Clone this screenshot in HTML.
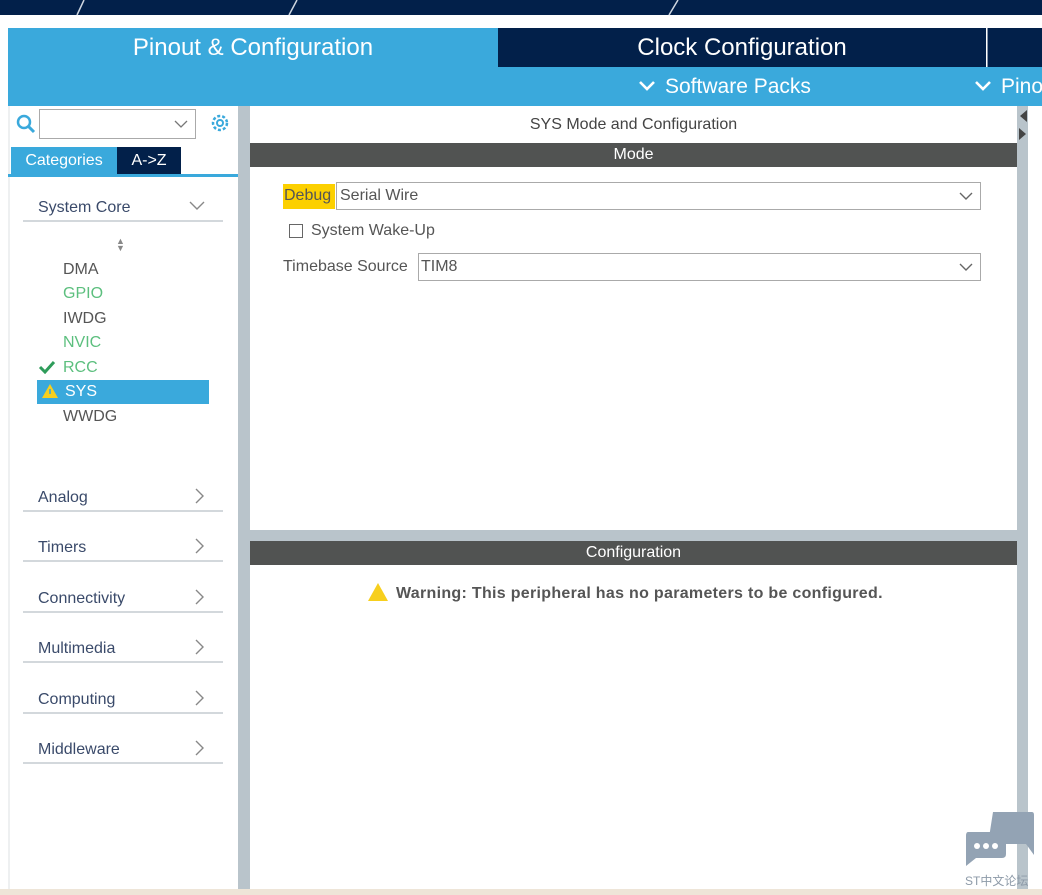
<!DOCTYPE html>
<html><head><meta charset="utf-8"><style>
*{margin:0;padding:0;box-sizing:border-box}
body{width:1042px;height:895px;position:relative;overflow:hidden;background:#fff;font-family:"Liberation Sans","Noto Sans CJK SC",sans-serif}
.a{position:absolute}
.cat{position:absolute;left:23px;width:200px;height:28px;border-bottom:2px solid #d3d8dc;font-size:16px;color:#3a4a6a}
.cat span{position:absolute;left:15px;top:5px}
.cat svg{position:absolute;right:18px;top:4px}
.it{position:absolute;left:63px;font-size:16px;color:#555}
.g{color:#5cbf7e}
</style></head><body>
<div class="a" style="left:0;top:0;width:1042px;height:15px;background:#02204a"></div>
<svg class="a" style="left:0;top:0" width="1042" height="16"><g stroke="#cfd6e0" stroke-width="1.5" fill="none"><path d="M84 0 L77 15"/><path d="M297 0 L289 15"/><path d="M678 0 L669 15"/></g></svg>
<div class="a" style="left:8px;top:28px;width:490px;height:40px;background:#3aa9dc;color:#fff;font-size:24px;text-align:center;line-height:40px">Pinout &amp; Configuration</div>
<div class="a" style="left:498px;top:28px;width:488px;height:40px;background:#02204a;color:#fff;font-size:24px;text-align:center;line-height:40px">Clock Configuration</div>
<div class="a" style="left:987px;top:28px;width:55px;height:40px;background:#02204a;border-left:1px solid #8896aa"></div>
<div class="a" style="left:8px;top:67px;width:1034px;height:39px;background:#3aa9dc"></div>
<svg class="a" style="left:638px;top:80px" width="18" height="12"><path d="M2 2 L9 9 L16 2" stroke="#fff" stroke-width="2.6" fill="none"/></svg>
<div class="a" style="left:665px;top:75px;color:#fff;font-size:21px">Software Packs</div>
<svg class="a" style="left:974px;top:80px" width="18" height="12"><path d="M2 2 L9 9 L16 2" stroke="#fff" stroke-width="2.6" fill="none"/></svg>
<div class="a" style="left:1001px;top:75px;color:#fff;font-size:21px">Pino</div>
<!-- left panel -->
<div class="a" style="left:8px;top:106px;width:232px;height:784px;background:#fff;border-left:2px solid #eef0f1"></div>
<div class="a" style="left:238px;top:106px;width:12px;height:784px;background:#b9c4cb"></div>
<svg class="a" style="left:16px;top:114px" width="22" height="22"><circle cx="8" cy="8" r="6" stroke="#3aa9dc" stroke-width="2.5" fill="none"/><path d="M12 12 L18 18" stroke="#3aa9dc" stroke-width="3"/></svg>
<div class="a" style="left:39px;top:109px;width:157px;height:30px;border:1px solid #aaa;background:#fff"></div>
<svg class="a" style="left:174px;top:120px" width="14" height="9"><path d="M1 1 L7 7 L13 1" stroke="#777" stroke-width="1.3" fill="none"/></svg>
<svg class="a" style="left:208px;top:111px" width="24" height="24"><circle cx="12" cy="12" r="7" stroke="#3aa9dc" stroke-width="2.5" stroke-dasharray="3 2" fill="none"/><circle cx="12" cy="12" r="3" stroke="#3aa9dc" stroke-width="2" fill="none"/></svg>
<div class="a" style="left:11px;top:147px;width:106px;height:27px;background:#3aa9dc;color:#fff;font-size:16px;line-height:27px;text-align:center">Categories</div>
<div class="a" style="left:117px;top:147px;width:64px;height:27px;background:#02204a;color:#fff;font-size:16px;line-height:27px;text-align:center">A-&gt;Z</div>
<div class="a" style="left:8px;top:174px;width:230px;height:3px;background:#3aa9dc"></div>
<div class="cat" style="top:194px"><span>System Core</span><svg width="16" height="10" style="top:7px"><path d="M1 1 L8 8 L15 1" stroke="#888" stroke-width="1.4" fill="none"/></svg></div>
<div class="a" style="left:116px;top:238px;font-size:9px;color:#888;line-height:7px">&#9650;<br>&#9660;</div>
<div class="it" style="top:261px">DMA</div>
<div class="it g" style="top:285px">GPIO</div>
<div class="it" style="top:310px">IWDG</div>
<div class="it g" style="top:334px">NVIC</div>
<svg class="a" style="left:38px;top:360px" width="18" height="14"><path d="M2 7 L7 12 L16 2" stroke="#2e9c5a" stroke-width="3" fill="none"/></svg>
<div class="it g" style="top:359px">RCC</div>
<div class="a" style="left:37px;top:380px;width:172px;height:24px;background:#3aa9dc"></div>
<svg class="a" style="left:41px;top:383px" width="18" height="16"><path d="M9 1 L17 15 L1 15Z" fill="#f7cf1d"/><rect x="8.2" y="6" width="1.6" height="5" fill="#3aa9dc"/></svg>
<div class="it" style="top:383px;left:65px;color:#fff">SYS</div>
<div class="it" style="top:408px">WWDG</div>
<div class="cat" style="top:484px"><span>Analog</span><svg width="10" height="16"><path d="M1 1 L8 8 L1 15" stroke="#888" stroke-width="1.4" fill="none"/></svg></div>
<div class="cat" style="top:534px"><span>Timers</span><svg width="10" height="16"><path d="M1 1 L8 8 L1 15" stroke="#888" stroke-width="1.4" fill="none"/></svg></div>
<div class="cat" style="top:585px"><span>Connectivity</span><svg width="10" height="16"><path d="M1 1 L8 8 L1 15" stroke="#888" stroke-width="1.4" fill="none"/></svg></div>
<div class="cat" style="top:635px"><span>Multimedia</span><svg width="10" height="16"><path d="M1 1 L8 8 L1 15" stroke="#888" stroke-width="1.4" fill="none"/></svg></div>
<div class="cat" style="top:686px"><span>Computing</span><svg width="10" height="16"><path d="M1 1 L8 8 L1 15" stroke="#888" stroke-width="1.4" fill="none"/></svg></div>
<div class="cat" style="top:736px"><span>Middleware</span><svg width="10" height="16"><path d="M1 1 L8 8 L1 15" stroke="#888" stroke-width="1.4" fill="none"/></svg></div>
<!-- right -->
<div class="a" style="left:250px;top:106px;width:767px;height:37px;text-align:center;line-height:37px;font-size:16px;color:#444">SYS Mode and Configuration</div>
<div class="a" style="left:250px;top:143px;width:767px;height:24px;background:#515352;color:#fff;text-align:center;line-height:24px;font-size:16px">Mode</div>
<div class="a" style="left:1017px;top:106px;width:11px;height:784px;background:#b9c4cb"></div>
<div class="a" style="left:1028px;top:106px;width:14px;height:784px;background:#fff"></div>
<svg class="a" style="left:1017px;top:108px" width="11" height="36"><path d="M10 2 L3 8 L10 14Z M2 20 L9 26 L2 32Z" fill="#444"/></svg>
<div class="a" style="left:283px;top:184px;width:52px;height:25px;background:#fcd000"></div>
<div class="a" style="left:284px;top:187px;font-size:16px;color:#555">Debug</div>
<div class="a" style="left:336px;top:182px;width:645px;height:28px;border:1px solid #aaa"></div>
<div class="a" style="left:340px;top:187px;font-size:16px;color:#555">Serial Wire</div>
<svg class="a" style="left:959px;top:192px" width="14" height="9"><path d="M1 1 L7 7 L13 1" stroke="#666" stroke-width="1.4" fill="none"/></svg>
<div class="a" style="left:289px;top:224px;width:14px;height:14px;border:1.5px solid #666"></div>
<div class="a" style="left:311px;top:222px;font-size:16px;color:#555">System Wake-Up</div>
<div class="a" style="left:283px;top:258px;font-size:16px;color:#555">Timebase Source</div>
<div class="a" style="left:418px;top:253px;width:563px;height:28px;border:1px solid #aaa"></div>
<div class="a" style="left:421px;top:258px;font-size:16px;color:#555">TIM8</div>
<svg class="a" style="left:959px;top:263px" width="14" height="9"><path d="M1 1 L7 7 L13 1" stroke="#666" stroke-width="1.4" fill="none"/></svg>
<div class="a" style="left:250px;top:530px;width:767px;height:11px;background:#b9c4cb"></div>
<div class="a" style="left:250px;top:541px;width:767px;height:24px;background:#515352;color:#fff;text-align:center;line-height:24px;font-size:16px">Configuration</div>
<svg class="a" style="left:367px;top:582px" width="22" height="20"><path d="M11 1 L21 19 L1 19Z" fill="#f7cf1d"/></svg>
<div class="a" style="left:396px;top:585px;font-size:16px;font-weight:bold;color:#555;letter-spacing:0.3px">Warning: This peripheral has no parameters to be configured.</div>
<!-- bottom -->
<div class="a" style="left:0;top:889px;width:1042px;height:6px;background:#eee5d8"></div>
<svg class="a" style="left:960px;top:810px" width="76" height="60"><path d="M33 2 H72 Q74 2 74 5 V45 L66 34 H28Z" fill="#93a3b4"/><path d="M8 22 H42 Q46 22 46 26 V44 Q46 48 42 48 H16 L6 56 V26 Q6 22 8 22Z" fill="#93a3b4"/><circle cx="17" cy="36" r="3" fill="#fff"/><circle cx="26" cy="36" r="3" fill="#fff"/><circle cx="35" cy="36" r="3" fill="#fff"/></svg>
<div class="a" style="left:965px;top:872px;font-size:12px;color:#8d9aa8">ST中文论坛</div>
</body></html>
